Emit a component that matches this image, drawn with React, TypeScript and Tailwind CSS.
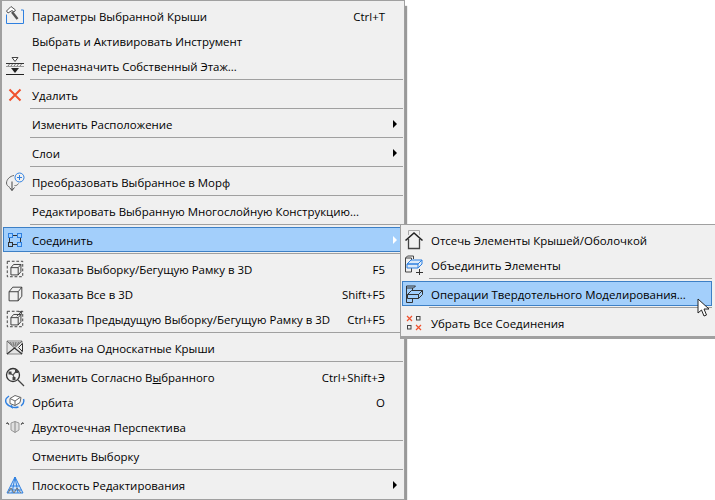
import React from "react";

const B = "#2f80e0";

function Hammer() {
  return (
    <svg width="20" height="20" viewBox="0 0 20 20" fill="none">
      <path d="M1.500 8.500v9h17V4h-2.500" stroke={B} strokeWidth="1" />
      <path d="M1.500 5l4.500-4.500 4.500 3.500-1.500 2-2-1.500-4 2.500z" fill="#fff" stroke="#555" strokeWidth="1" />
      <path d="M7 6l5.500 7" stroke="#555" strokeWidth="2.400" />
    </svg>
  );
}
function Floor() {
  return (
    <svg width="20" height="20" viewBox="0 0 20 20" fill="none">
      <path d="M7 1.500h6l-3 4z" fill="#fff" stroke="#444" />
      <path d="M1 7.500h18" stroke="#333" />
      <path d="M3 10l1.500-2M6 10l1.500-2M9 10l1.500-2M12 10l1.500-2M15 10l1.500-2" stroke="#777" />
      <path d="M1 10.500h18" stroke="#999" />
      <path d="M6 12h8l-4 5z" fill="#222" />
      <path d="M1 18.500h18" stroke="#222" />
    </svg>
  );
}
function X() {
  return (
    <svg width="20" height="20" viewBox="0 0 20 20" fill="none">
      <path d="M4.500 4.500l11 11M15.500 4.500l-11 11" stroke="#f0512d" strokeWidth="2" />
    </svg>
  );
}
function Morph() {
  return (
    <svg width="20" height="20" viewBox="0 0 20 20" fill="none">
      <path d="M9 3.500C5 4 1.500 7.500 1.500 11c0 2 1.500 3.500 3 4M9.500 13.500c1.500.5 3-.5 4-2" stroke="#666" />
      <path d="M7 9.500v9M4.500 15.500L7 18.500l2.500-3" stroke="#444" />
      <circle cx="14.500" cy="5.500" r="4.500" fill="#f0f0f0" stroke={B} />
      <path d="M14.500 3v5M12 5.500h5" stroke={B} />
    </svg>
  );
}
function Connect() {
  return (
    <svg width="20" height="20" viewBox="0 0 20 20" fill="none">
      <path d="M7 5.500h6M7 14.500h6M4.500 8v4M15.500 8v4" stroke="#333" />
      <rect x="3.500" y="3.500" width="4" height="4" stroke={B} />
      <rect x="12.500" y="3.500" width="4" height="4" stroke={B} />
      <rect x="3.500" y="12.500" width="4" height="4" stroke="#333" />
      <rect x="12.500" y="12.500" width="4" height="4" stroke={B} />
    </svg>
  );
}
function Cube({ dashed, arrow }: { dashed?: boolean; arrow?: boolean }) {
  return (
    <svg width="22" height="22" viewBox="0 0 22 22" fill="none">
      {dashed && <rect x="2.500" y="2.500" width="17" height="17" stroke="#333" strokeDasharray="3 2" />}
      <path
        d={dashed ? "M6.500 9.500h8v8h-8zM6.500 9.500l3-3.500h8v8l-3 3.500M14.500 9.500l3-3.500" : "M4.500 8.500h10v10h-10zM4.500 8.500l4-5h10v10l-4 5M14.500 8.500l4-5"}
        stroke="#333"
      />
      {arrow && <path d="M13 8l5-5M15 3h3v3" stroke="#333" />}
    </svg>
  );
}
function Split() {
  return (
    <svg width="18" height="15" viewBox="0 0 18 15" fill="none">
      <path d="M1 1h15v13H1z" fill="#e4e4e4" stroke="#888" />
      <path d="M1 1l7.500 7L16 1" fill="#bbb" stroke="#666" />
      <path d="M1 14l7.500-6 7.500 6" stroke="#333" strokeWidth="1.200" />
      <path d="M4 2l2 3M7 2l1 4M10 2l-1 4M13 2l-2 3" stroke="#777" />
      <path d="M16.500 3.500l-4 4 4 4z" fill="#f0f0f0" stroke="#333" />
    </svg>
  );
}
function Pick() {
  return (
    <svg width="20" height="20" viewBox="0 0 20 20" fill="none">
      <circle cx="8" cy="8" r="6.500" stroke="#333" strokeWidth="1.300" />
      <path d="M4.500 6L8 8l3.500-4M8 8l1.500 3.500" stroke="#555" strokeWidth="1.200" />
      <path d="M3.500 4.500h3v3h-3zM10 3h3v3h-3zM7.500 10h3v3h-3z" fill="#444" />
      <path d="M13 13l6 6" stroke="#444" strokeWidth="1.300" />
    </svg>
  );
}
function Orbit() {
  return (
    <svg width="20" height="18" viewBox="0 0 20 18" fill="none">
      <path d="M5 5.500l5-3 6 2-1 5-5 3-5-2zM10 8l5-3.500M10 8v4.500M10 8L5 5.500" stroke="#666" fill="#fff" />
      <path d="M4 3C1 5 0 8 1.500 10.500c2 3 7 5 12 3.500M18.500 6c1 3-.5 5.500-2.500 7" stroke={B} strokeWidth="1.400" />
      <path d="M7 11.500l-2 2 3 2.500z" fill={B} />
    </svg>
  );
}
function Persp() {
  return (
    <svg width="20" height="14" viewBox="0 0 20 14" fill="none">
      <path d="M6 3l4-1.500L14 3v7l-4 2.500L6 10z" fill="#e0e0e0" stroke="#999" />
      <path d="M10 1.500v11" stroke="#888" />
      <path d="M1 3.500h3M16 3.500h3M2 2l2 3M18 2l-2 3" stroke="#666" />
    </svg>
  );
}
function Plane() {
  return (
    <svg width="20" height="18" viewBox="0 0 20 18" fill="none">
      <path d="M10 1l8 16H2z" stroke={B} fill="#cfe3f8" />
      <path d="M10 1L7 17M10 1l3 16M5.500 10h9M3.500 14h13" stroke={B} />
      <path d="M3 17l3-5 3 5M9 17l3-5 4 5" stroke="#777" />
    </svg>
  );
}
function House() {
  return (
    <svg width="20" height="20" viewBox="0 0 20 20" fill="none">
      <path d="M4.500 5V.500h11V5" stroke="#aaa" />
      <path d="M1.500 10.500L10 3l8.500 7.500" stroke="#222" strokeWidth="1.600" />
      <path d="M4.500 9v9.500h11V9" stroke="#444" strokeWidth="1.300" />
    </svg>
  );
}
function Merge() {
  return (
    <svg width="20" height="20" viewBox="0 0 20 20" fill="none">
      <path d="M1.500 3v14h6V3zM1.500 3l2-2h6v3" stroke="#444" />
      <path d="M3 9l4-4h11l-4 4zM3 9h11v4H3zM14 13l4-4V5" fill="#dbe9f8" stroke={B} />
      <path d="M12 17.500h7M15.500 14v7" stroke="#333" />
    </svg>
  );
}
function Solid() {
  return (
    <svg width="20" height="20" viewBox="0 0 20 20" fill="none">
      <path d="M2.500 2h9l-2 2h-7zM2.500 4v14.500h6V4" stroke="#333" />
      <path d="M3.500 10.500l4-4h11l-4 4zM3.500 10.500h11v4h-11zM14.500 14.500l4-4v-4" fill="#a3cffb" stroke="#333" />
    </svg>
  );
}
function Remove() {
  return (
    <svg width="18" height="16" viewBox="0 0 18 16" fill="none">
      <path d="M2 1l5 5M7 1L2 6M11 10l5 5M16 10l-5 5" stroke="#f0512d" strokeWidth="1.200" />
      <rect x="11.500" y="1.500" width="3.500" height="3.500" stroke="#444" />
      <rect x="2.500" y="10.500" width="3.500" height="3.500" stroke="#444" />
    </svg>
  );
}
function Cursor() {
  return (
    <svg width="14" height="20" viewBox="0 0 14 20">
      <path d="M1 1v14l3.500-3 2.500 6 2.500-1-2.500-6h5z" fill="#fff" stroke="#222" strokeWidth="1" />
    </svg>
  );
}

type Row = {
  t: React.ReactNode;
  icon?: React.ReactNode;
  key?: string;
  arrow?: boolean;
  hot?: boolean;
};
type Entry = Row | "sep";

const main: Entry[] = [
  { t: "Параметры Выбранной Крыши", icon: <Hammer />, key: "Ctrl+T" },
  { t: "Выбрать и Активировать Инструмент" },
  { t: "Переназначить Собственный Этаж...", icon: <Floor /> },
  "sep",
  { t: "Удалить", icon: <X /> },
  "sep",
  { t: "Изменить Расположение", arrow: true },
  "sep",
  { t: "Слои", arrow: true },
  "sep",
  { t: "Преобразовать Выбранное в Морф", icon: <Morph /> },
  "sep",
  { t: "Редактировать Выбранную Многослойную Конструкцию..." },
  "sep",
  { t: "Соединить", icon: <Connect />, arrow: true, hot: true },
  "sep",
  { t: "Показать Выборку/Бегущую Рамку в 3D", icon: <Cube dashed />, key: "F5" },
  { t: "Показать Все в 3D", icon: <Cube />, key: "Shift+F5" },
  { t: "Показать Предыдущую Выборку/Бегущую Рамку в 3D", icon: <Cube dashed arrow />, key: "Ctrl+F5" },
  "sep",
  { t: "Разбить на Односкатные Крыши", icon: <Split /> },
  "sep",
  { t: <>Изменить Согласно В<span className="underline">ы</span>бранного</>, icon: <Pick />, key: "Ctrl+Shift+Э" },
  { t: "Орбита", icon: <Orbit />, key: "O" },
  { t: "Двухточечная Перспектива", icon: <Persp /> },
  "sep",
  { t: "Отменить Выборку" },
  "sep",
  { t: "Плоскость Редактирования", icon: <Plane />, arrow: true },
];

const sub: Entry[] = [
  { t: "Отсечь Элементы Крышей/Оболочкой", icon: <House /> },
  { t: "Объединить Элементы", icon: <Merge /> },
  "sep",
  { t: "Операции Твердотельного Моделирования...", icon: <Solid />, hot: true },
  "sep",
  { t: "Убрать Все Соединения", icon: <Remove /> },
];

function Sep() {
  return (
    <div className="h-1 pt-px ml-[27px]">
      <div className="h-px bg-[#a0a0a0]" />
    </div>
  );
}

function MenuRow({ r }: { r: Row }) {
  return (
    <div
      className={`relative h-[25px] flex items-center border ${
        r.hot ? "bg-[#a3cffb] border-[#3d80c6]" : "border-transparent"
      }`}
    >
      <div className="w-[20px] ml-px mr-[7px] shrink-0 flex items-center justify-center">{r.icon}</div>
      <span className="whitespace-nowrap pt-[2px]">{r.t}</span>
      <span className="ml-auto mr-[17px] whitespace-nowrap pt-[2px]">{r.key}</span>
      {r.arrow && (
        <span
          className={`absolute right-[5px] w-0 h-0 border-y-[4px] border-y-transparent border-l-[4px] ${
            r.hot ? "border-l-white" : "border-l-black"
          }`}
        />
      )}
    </div>
  );
}

export default function App() {
  return (
    <div
      className="relative w-[715px] h-[500px] overflow-hidden bg-white text-[11.45px] text-black"
      style={{ fontFamily: '"Open Sans", "Noto Sans", sans-serif' }}
    >
      <div className="w-[405px] h-[500px] flex flex-col pt-[2px] pl-px pr-px bg-[#f0f0f0] border border-[#a0a0a0] border-l-2 shadow-[2px_6px_1px_#999999]">
        {main.map((r, i) => (r === "sep" ? <Sep key={i} /> : <MenuRow key={i} r={r} />))}
      </div>

      <div className="absolute left-[400px] top-[224px] w-[315px] h-[113px] flex flex-col pt-[2px] pl-px pr-[3px] bg-[#f0f0f0] border border-[#a0a0a0] border-r-0 shadow-[0_2px_0_#a0a0a0]">
        {sub.map((r, i) => (r === "sep" ? <Sep key={i} /> : <MenuRow key={i} r={r} />))}
      </div>

      <div className="absolute left-[697px] top-[298px]">
        <Cursor />
      </div>
    </div>
  );
}
